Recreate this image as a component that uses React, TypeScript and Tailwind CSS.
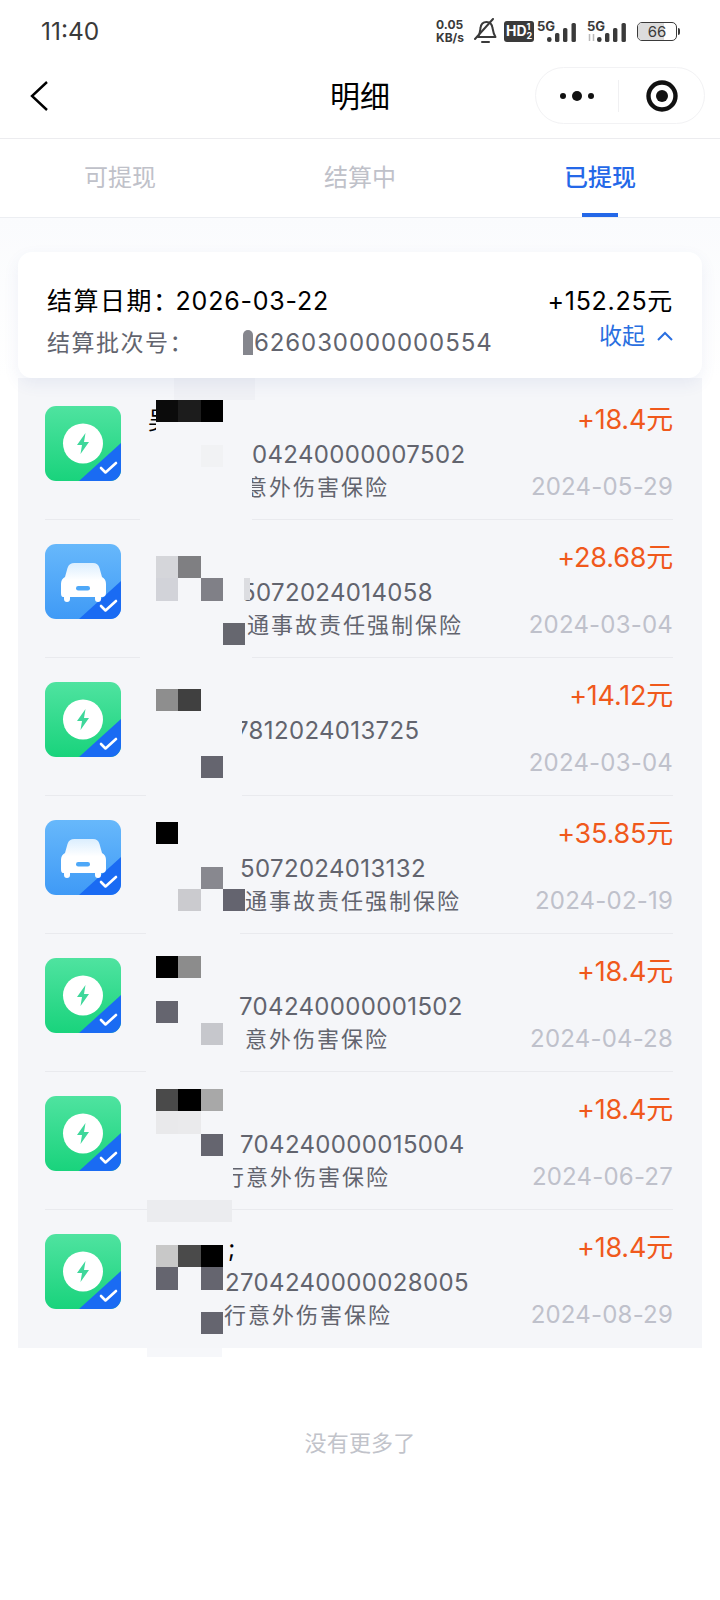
import React from "react";

const FONT = { fontFamily: '"Inter", "Noto Sans CJK SC", sans-serif' };

type Patch = { cls: string };

type Entry = {
  kind: "bolt" | "car";
  name?: string;
  namePad?: string;
  code: string;
  codePad: string;
  desc?: string;
  descPad?: string;
  amount: string;
  date: string;
  mosaicTop: string;
  mosaic: string[][];
  gap: string;
  patches?: Patch[];
};

const WASH = "#f5f6f9";

const entries: Entry[] = [
  {
    kind: "bolt", name: "吴", namePad: "pl-0", code: "04240000007502", codePad: "pl-[104px]",
    desc: "意外伤害保险", descPad: "pl-[97px]", amount: "+18.4元", date: "2024-05-29", mosaicTop: "top-[18px]",
    mosaic: [["#0b0b0b", "#1c1c1c", "#000000", ""], [WASH, WASH, WASH, ""], ["", "", "#f1f2f4", ""]],
    gap: "left-[95px] w-[112px]",
    patches: [
      { cls: "left-[129px] top-[-4px] h-[22px] w-[81px] bg-[#f0f1f5]" },
      { cls: "left-[111px] top-[92px] h-[24px] w-[96px] bg-[#f5f6f9]" },
    ],
  },
  {
    kind: "car", code: "5072024014058", codePad: "pl-[93px]",
    desc: "通事故责任强制保险", descPad: "pl-[99px]", amount: "+28.68元", date: "2024-03-04", mosaicTop: "top-[36px]",
    mosaic: [["#d5d6da", "#7f7f82", "", ""], ["#d2d3d9", "", "#808087", ""], ["", "", "", ""], ["", "", "", "#66676f"]],
    gap: "left-[95px] w-[112px]",
    patches: [
      { cls: "left-[192px] top-[58px] h-[24px] w-[7px] bg-[#f5f6f9]" },
      { cls: "left-[199px] top-[58px] h-[22px] w-[6px] bg-[#dcdde1]" },
    ],
  },
  {
    kind: "bolt", code: "7812024013725", codePad: "pl-[87px]", amount: "+14.12元", date: "2024-03-04", mosaicTop: "top-[31px]",
    mosaic: [["#8e8e8e", "#404040", "", ""], ["", "", "", ""], ["", "", "", ""], ["", "", "#65656f", ""]],
    gap: "left-[101px] w-[96px]",
    patches: [{ cls: "left-[188px] top-[60px] h-[26px] w-[9px] bg-[#f5f6f9]" }],
  },
  {
    kind: "car", code: "5072024013132", codePad: "pl-[92px]",
    desc: "通事故责任强制保险", descPad: "pl-[97px]", amount: "+35.85元", date: "2024-02-19", mosaicTop: "top-[26px]",
    mosaic: [["#000000", "", "", ""], ["", "", "", ""], ["", "", "#88888f", ""], ["", "#cbcbcf", "", "#64646f"]],
    gap: "left-[101px] w-[94px]",
  },
  {
    kind: "bolt", code: "704240000001502", codePad: "pl-[91px]",
    desc: "意外伤害保险", descPad: "pl-[97px]", amount: "+18.4元", date: "2024-04-28", mosaicTop: "top-[22px]",
    mosaic: [["#000000", "#8c8c8c", "", ""], ["", "", "", ""], ["#65656f", "", "", ""], ["", "", "#c6c7cc", ""]],
    gap: "left-[101px] w-[94px]",
  },
  {
    kind: "bolt", code: "704240000015004", codePad: "pl-[92px]",
    desc: "行意外伤害保险", descPad: "pl-[74px]", amount: "+18.4元", date: "2024-06-27", mosaicTop: "top-[17px]",
    mosaic: [["#4a4a4a", "#000000", "#a8a8a8", ""], ["#e9e9eb", "#eaeaec", "", ""], ["", "", "#65656f", ""]],
    gap: "left-[102px] w-[85px]",
    patches: [
      { cls: "left-[102px] top-[128px] h-[22px] w-[85px] bg-[#ebecef]" },
      { cls: "left-[172px] top-[90px] h-[30px] w-[16px] bg-[#f5f6f9]" },
    ],
  },
  {
    kind: "bolt", name: ";", namePad: "pl-[80px]", code: "2704240000028005", codePad: "pl-[77px]",
    desc: "行意外伤害保险", descPad: "pl-[76px]", amount: "+18.4元", date: "2024-08-29", mosaicTop: "top-[35px]",
    mosaic: [["#c8c8c8", "#4a4a4a", "#000000", ""], ["#65656f", "", "#65656f", ""], ["", "", "", ""], ["", "", "#65656f", ""]],
    gap: "left-[102px] w-[85px]",
    patches: [{ cls: "left-[102px] top-[138px] h-[9px] w-[75px] bg-[#f6f7fa]" }],
  },
];

function ProductIcon({ kind }: { kind: "bolt" | "car" }) {
  const id = `fill-${kind}`;
  return (
    <svg width="76" height="75" viewBox="0 0 76 75" className="shrink-0">
      <defs>
        <linearGradient id={id} x1="0" y1="0" x2="0" y2="1">
          <stop offset="0" stopColor={kind === "bolt" ? "#4fe3a0" : "#67b8fb"} />
          <stop offset="1" stopColor={kind === "bolt" ? "#19d37c" : "#3f9af6"} />
        </linearGradient>
        <linearGradient id="car-body" x1="0" y1="0" x2="0" y2="1">
          <stop offset="0" stopColor="#dbeefe" />
          <stop offset="0.45" stopColor="#ffffff" />
        </linearGradient>
        <clipPath id={`${id}-clip`}>
          <rect width="76" height="75" rx="11" />
        </clipPath>
      </defs>
      <g clipPath={`url(#${id}-clip)`}>
        <rect width="76" height="75" fill={`url(#${id})`} />
        <polygon points="76,37 76,75 34,75" fill="#1a6bf3" />
      </g>
      <path d="M56 62 l4.5 4.5 L71 57" fill="none" stroke="#fff" strokeWidth="2.6" strokeLinecap="round" strokeLinejoin="round" />
      {kind === "bolt" ? (
        <>
          <circle cx="38" cy="37.5" r="20" fill="#fff" />
          <path d="M40.5 27 L32 39 h5 l-1.5 9 L44 36 h-5 z" fill="#3ed79a" />
        </>
      ) : (
        <>
          <path
            d="M29 19 h19 q5 0 6.5 5 l2.5 9 q4 2 4 7 v9 q0 4 -4 4 h-1 v2 q0 3 -3 3 q-3 0 -3 -3 v-2 h-25 v2 q0 3 -3 3 q-3 0 -3 -3 v-2 h-1 q-2 0 -2 -4 v-9 q0 -5 4 -7 l2.5 -9 q1.5 -5 7 -5 z"
            fill="url(#car-body)"
          />
          <rect x="31" y="42" width="14" height="4.5" rx="2.2" fill="#4ea8f8" />
        </>
      )}
    </svg>
  );
}

// Pixelated cover over the personal data in a row
function Mosaic({ top, cells }: { top: string; cells: string[][] }) {
  return (
    <div className={`absolute left-[111px] ${top} grid grid-cols-[repeat(4,22.3px)] auto-rows-[22.3px]`}>
      {cells.flat().map((c, i) => (
        <div key={i} style={c ? { backgroundColor: c } : undefined} />
      ))}
    </div>
  );
}

function Row({ e, last }: { e: Entry; last: boolean }) {
  return (
    <div className={`relative ml-[27px] mr-[29px] flex h-[138px] ${last ? "" : "border-b border-[#e9eaee]"}`}>
      <div className="mt-[24px]">
        <ProductIcon kind={e.kind} />
      </div>
      <div className="ml-[27px] flex-1 pt-[21px] text-[#62646e]">
        <div className={`h-[36px] text-[24px] leading-[36px] text-black ${e.namePad ?? ""}`}>{e.name ?? ""}</div>
        <div className={`h-[32px] text-[24px] leading-[32px] tracking-[0.35px] ${e.codePad}`}>{e.code}</div>
        <div className={`h-[32px] text-[22px] leading-[32px] tracking-[2px] whitespace-nowrap ${e.descPad ?? ""}`}>{e.desc ?? ""}</div>
      </div>
      <div className="absolute right-0 top-[20px] text-[27px] leading-[36px] tracking-[-0.2px] text-[#f0591c]">{e.amount}</div>
      <div className="absolute right-0 top-[89px] text-[24px] leading-[32px] tracking-[0.2px] text-[#bfc1cb]">{e.date}</div>
      {/* the cover also breaks the divider under the row */}
      {!last && <div className={`absolute bottom-[-1px] h-[2px] bg-[#f5f6f9] ${e.gap}`} />}
      {e.patches?.map((p, i) => (
        <div key={i} className={`absolute ${p.cls}`} />
      ))}
      <Mosaic top={e.mosaicTop} cells={e.mosaic} />
    </div>
  );
}

function StatusBar() {
  const bars = (
    <svg width="30" height="19" viewBox="0 0 30 19">
      <rect x="0" y="14" width="4.6" height="5" rx="2.2" fill="#3a3a3a" />
      <rect x="8" y="10" width="4.4" height="9" rx="1.6" fill="#3a3a3a" />
      <rect x="16" y="5" width="4.4" height="14" rx="1.6" fill="#3a3a3a" />
      <rect x="24.5" y="0" width="4.4" height="19" rx="1.6" fill="#3a3a3a" />
    </svg>
  );
  return (
    <div className="flex h-[62px] items-center justify-between pl-[41px] pr-[40px] text-[#3a3a3a]">
      <span className="text-[24.5px] leading-none">11:40</span>
      <div className="flex items-center">
        <div className="w-[30px] text-[12px] leading-[13px] font-bold">
          <div>0.05</div>
          <div>KB/s</div>
        </div>
        <svg width="24" height="26" viewBox="0 0 24 26" fill="none" stroke="#3a3a3a" strokeWidth="2" strokeLinecap="round" strokeLinejoin="round" className="ml-[7px]">
          <path d="M5 19 c2-3 2-6 2.5-9 c.5-4 3-6 6-6 c3 0 5.5 2 6 6 c.5 3 1 6 3 9 z" />
          <path d="M9 24 h7" />
          <path d="M20 1 L2 21" />
        </svg>
        <div className="ml-[7px] flex h-[21px] w-[30px] items-center rounded-[3px] bg-[#3a3a3a] pl-[2px] text-[14px] leading-none font-bold text-white">
          HD
          <span className="flex flex-col text-[9px] leading-[9px]">
            <span>1</span>
            <span>2</span>
          </span>
        </div>
        <div className="relative ml-[3px] h-[22px] w-[41px]">
          <span className="absolute left-0 top-0 text-[13px] leading-[12px] font-bold">5G</span>
          <div className="absolute left-[10px] top-[3px]">{bars}</div>
        </div>
        <div className="relative ml-[9px] h-[22px] w-[40px]">
          <span className="absolute left-0 top-0 text-[13px] leading-[12px] font-bold">5G</span>
          <svg width="9" height="7" viewBox="0 0 9 7" className="absolute left-0 top-[14px]">
            <path d="M2.5 0 V7 M6.5 0 V7" stroke="#b9b9b9" strokeWidth="1.5" />
          </svg>
          <div className="absolute left-[10px] top-[3px]">{bars}</div>
        </div>
        <div className="ml-[10px] flex items-center">
          <div className="relative flex h-[19px] w-[40px] items-center justify-center overflow-hidden rounded-[5px] border border-[#3a3a3a] text-[15px] leading-none">
            <div className="absolute inset-y-0 left-0 w-[26px] bg-[#dcdcdc]" />
            <span className="relative">66</span>
          </div>
          <div className="ml-[1px] h-[7px] w-[2px] rounded-r bg-[#3a3a3a]" />
        </div>
      </div>
    </div>
  );
}

function NavBar() {
  return (
    <div className="relative flex h-[77px] items-center border-b border-[#ececef] bg-white pb-[9px]">
      <svg width="20" height="32" viewBox="0 0 20 32" className="ml-[29px]">
        <path d="M18 2 L3 16 L18 30" fill="none" stroke="#000" strokeWidth="2.4" />
      </svg>
      <div className="absolute inset-x-0 text-center text-[30px] leading-none text-black">明细</div>
      <div className="ml-auto mr-[15px] flex h-[57px] w-[170px] items-center rounded-full border border-[#f2f2f4]">
        <svg width="38" height="14" viewBox="0 0 38 14" className="ml-[23px]">
          <circle cx="4" cy="7" r="3" fill="#111" />
          <circle cx="18" cy="7" r="5" fill="#111" />
          <circle cx="32" cy="7" r="3" fill="#111" />
        </svg>
        <div className="ml-[21px] h-[32px] w-px bg-[#f0f0f2]" />
        <svg width="32" height="32" viewBox="0 0 32 32" className="ml-[27px]">
          <circle cx="16" cy="16" r="13.5" fill="none" stroke="#111" strokeWidth="4.4" />
          <circle cx="16" cy="16" r="6" fill="#111" />
        </svg>
      </div>
    </div>
  );
}

function Tabs() {
  return (
    <div className="flex h-[79px] border-b border-[#eceef2] bg-white text-[24px]">
      <div className="flex flex-1 justify-center pt-[21px] text-[#bfc1c9]">可提现</div>
      <div className="flex flex-1 justify-center pt-[21px] text-[#bfc1c9]">结算中</div>
      <div className="relative flex flex-1 justify-center pt-[21px] font-medium text-[#2468e8]">
        已提现
        <div className="absolute bottom-0 h-[4px] w-[36px] bg-[#2468e8]" />
      </div>
    </div>
  );
}

export default function App() {
  return (
    <div className="h-[1600px] w-[720px] overflow-hidden bg-white" style={FONT}>
      <div className="bg-white">
        <StatusBar />
        <NavBar />
        <Tabs />
      </div>
      <div className="bg-[linear-gradient(#fafbfd,#ffffff_160px)] px-[18px] pt-[34px]">
        <div className="relative z-10 h-[126px] rounded-[14px] bg-white px-[29px] pt-[31px] shadow-[0_6px_16px_rgba(70,90,170,0.08)]">
          <div className="flex justify-between text-[25px] leading-[36px] text-black">
            <span className="tracking-[1.5px]">
              结算日期：<span className="ml-[-4px] tracking-[0.8px]">2026-03-22</span>
            </span>
            <span className="tracking-[0.7px]">+152.25元</span>
          </div>
          <div className="mt-[2px] flex justify-between">
            <div className="flex items-center pt-[1px] text-[23px] leading-[34px] tracking-[1.5px] text-[#62646e]">
              <span>结算批次号：</span>
              <span className="ml-[49px] h-[25px] w-[10px] rounded-t-full bg-[#85868d]" />
              <span className="ml-[1px] text-[24px] tracking-[0.9px]">626030000000554</span>
            </div>
            <div className="flex items-center pb-[12px] text-[23px] leading-[30px] text-[#2a6fe0]">
              收起
              <svg width="16" height="10" viewBox="0 0 16 10" className="ml-[12px]">
                <path d="M1 9 L8 2 L15 9" fill="none" stroke="#2a6fe0" strokeWidth="2" />
              </svg>
            </div>
          </div>
        </div>
        <div className="bg-[#f5f6f9] pt-[4px]">
          {entries.map((e, i) => (
            <Row key={i} e={e} last={i === entries.length - 1} />
          ))}
        </div>
      </div>
      <div className="mt-[80px] text-center text-[22px] leading-[30px] tracking-[0.2px] text-[#c1c3ca]">没有更多了</div>
    </div>
  );
}
